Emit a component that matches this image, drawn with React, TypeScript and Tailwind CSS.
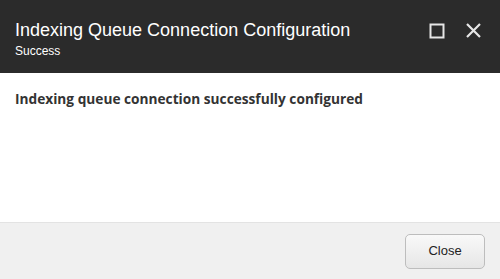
export default function App() {
  return (
    <div className="flex flex-col w-[500px] h-[279px] bg-white" style={{ fontFamily: '"Liberation Sans", Arial, sans-serif' }}>
      <div className="h-[73px] bg-[#2b2b2b] flex items-start justify-between pl-[15px] pr-[18px] pt-[19px]">
        <div>
          <h1 className="text-[18px] leading-[22px] text-white">Indexing Queue Connection Configuration</h1>
          <p className="text-[12px] leading-[14px] mt-[3px] text-white">Success</p>
        </div>
        <div className="flex items-center gap-[20px] pt-[3px]">
          <svg width="16" height="16" viewBox="0 0 16 16">
            <rect x="1.5" y="1.5" width="13" height="13" fill="none" stroke="#e6e6e6" strokeWidth="2" />
          </svg>
          <svg width="17" height="17" viewBox="0 0 17 17">
            <path d="M2 2L15 15M15 2L2 15" stroke="#e6e6e6" strokeWidth="2.2" />
          </svg>
        </div>
      </div>
      <div className="flex-1 px-[15px] pt-[16px]">
        <p className="text-[13.7px] leading-[20px] font-bold text-[#333333]" style={{ fontFamily: '"Open Sans", sans-serif' }}>
          Indexing queue connection successfully configured
        </p>
      </div>
      <div className="h-[57px] bg-[#f0f0f0] border-t border-[#e3e3e3] flex items-center justify-end pr-[15px]">
        <button className="w-[80px] h-[35px] rounded-[5px] border border-[#bdbdbd] bg-gradient-to-b from-[#f9f9f9] to-[#e6e6e6] text-[13px] text-[#222222]">
          Close
        </button>
      </div>
    </div>
  )
}
